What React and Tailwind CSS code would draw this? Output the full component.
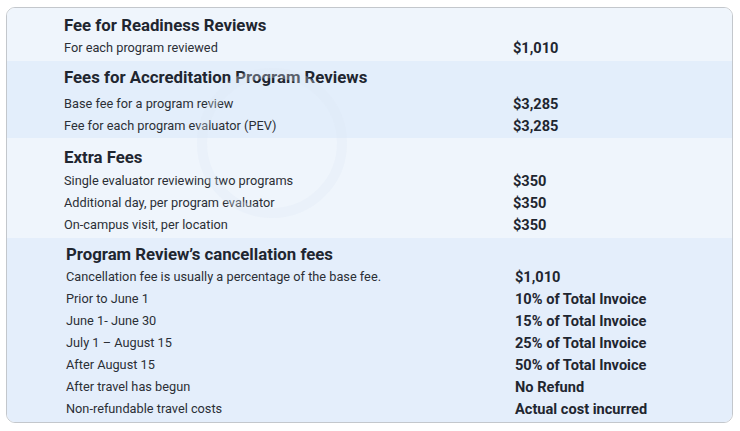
const sections = [
  {
    title: 'Fee for Readiness Reviews',
    bg: 'bg-[#eff5fc]',
    pad: 'pt-[6px] pb-[3px]',
    gap: 'mt-0',
    rows: [['For each program reviewed', '$1,010']],
  },
  {
    title: 'Fees for Accreditation Program Reviews',
    bg: 'bg-[#e3eefb]',
    pad: 'pt-[5px] pb-[2px]',
    gap: 'mt-[4px]',
    rows: [
      ['Base fee for a program review', '$3,285'],
      ['Fee for each program evaluator (PEV)', '$3,285'],
    ],
  },
  {
    title: 'Extra Fees',
    bg: 'bg-[#eff5fc]',
    pad: 'pt-[8px] pb-[3px]',
    gap: 'mt-[1px]',
    rows: [
      ['Single evaluator reviewing two programs', '$350'],
      ['Additional day, per program evaluator', '$350'],
      ['On-campus visit, per location', '$350'],
    ],
  },
  {
    title: 'Program Review\u2019s cancellation fees',
    bg: 'bg-[#e4eefb]',
    pad: 'pt-[5px] pb-[3px] pl-[2px]',
    gap: 'mt-0',
    rows: [
      ['Cancellation fee is usually a percentage of the base fee.', '$1,010'],
      ['Prior to June 1', '10% of Total Invoice'],
      ['June 1- June 30', '15% of Total Invoice'],
      ['July 1 \u2013 August 15', '25% of Total Invoice'],
      ['After August 15', '50% of Total Invoice'],
      ['After travel has begun', 'No Refund'],
      ['Non-refundable travel costs', 'Actual cost incurred'],
    ],
  },
];

export default function App() {
  return (
    <div className="w-[740px] h-[431px] bg-white pt-[7px] pl-[6px] font-['Roboto',sans-serif]">
      <div className="relative w-[727px] h-[416px] rounded-[9px] border border-[#c3c7cc] overflow-hidden flex flex-col">
        {sections.map((s) => (
          <div key={s.title} className={`${s.bg} ${s.pad}`}>
            <div className="pl-[57px] text-[16.8px] leading-[22px] font-bold text-[#1f2630]">{s.title}</div>
            <div className={s.gap}>
              {s.rows.map(([label, value]) => (
                <div key={label} className="grid grid-cols-[506px_1fr] h-[22px] items-center">
                  <span className="pl-[57px] text-[12.75px] text-[#2b2f36]">{label}</span>
                  <span className="pt-[2px] text-[14.6px] font-bold text-[#1f2630]">{value}</span>
                </div>
              ))}
            </div>
          </div>
        ))}
        <div className="flex-1 bg-[#e4eefb]" />
        <div className="pointer-events-none absolute left-[190px] top-[60px] w-[150px] h-[150px] rounded-full border-[10px] border-[#dde8f4] opacity-30" />
      </div>
    </div>
  );
}
